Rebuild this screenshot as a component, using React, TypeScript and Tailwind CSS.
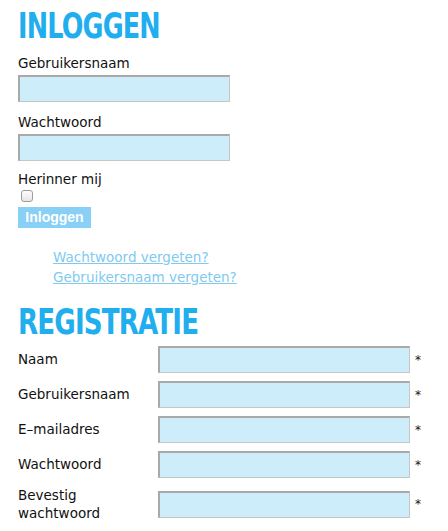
const headingFont = { fontFamily: '"DejaVu Sans Condensed", "Liberation Sans", sans-serif' };

function Field({ className = "" }: { className?: string }) {
  return (
    <input
      type="text"
      className={`block h-[27px] border-t-2 border-l-2 border-b border-r border-t-[#a9a9a9] border-l-[#a9a9a9] border-b-[#c6c6c6] border-r-[#c6c6c6] bg-[#ccedf9] outline-none ${className}`}
    />
  );
}

const registerRows = [
  { label: "Naam" },
  { label: "Gebruikersnaam" },
  { label: "E\u2013mailadres" },
  { label: "Wachtwoord" },
  { label: "Bevestig wachtwoord", wrap: true },
];

export default function App() {
  return (
    <div className="min-h-[531px] w-[448px] bg-white pl-[18px] pt-[9px] text-[13.5px] text-[#111]" style={{ fontFamily: '"DejaVu Sans", "Liberation Sans", sans-serif' }}>
      <h1 className="origin-left scale-x-[0.81] text-[35px] font-bold leading-[35px] tracking-[-1px] text-[#20aeef]" style={headingFont}>
        INLOGGEN
      </h1>

      <form className="mt-[10px]" onSubmit={(e) => e.preventDefault()}>
        <label className="block leading-[18px]">Gebruikersnaam</label>
        <Field className="mt-[3px] w-[212px]" />

        <label className="mt-[11px] block leading-[18px]">Wachtwoord</label>
        <Field className="mt-[3px] w-[212px]" />

        <label className="mt-[9px] block leading-[18px]">Herinner mij</label>
        <input
          type="checkbox"
          className="mt-[2px] ml-[3px] block h-[12px] w-[12px] appearance-none rounded-[3px] border border-[#9c9c9c] bg-gradient-to-b from-[#fdfdfd] to-[#e6e6e6]"
        />
        <button
          type="submit"
          className="mt-[5px] block h-[21px] w-[73px] bg-[#88d0f5] text-[14px] font-bold leading-[21px] text-white"
          style={{ fontFamily: '"Liberation Sans", Arial, sans-serif' }}
        >
          Inloggen
        </button>
      </form>

      <ul className="mt-[19px] pl-[35px] leading-[20px]">
        <li>
          <a href="#" className="text-[#80caf0] underline">Wachtwoord vergeten?</a>
        </li>
        <li>
          <a href="#" className="text-[#80caf0] underline">Gebruikersnaam vergeten?</a>
        </li>
      </ul>

      <h2 className="mt-[18px] origin-left scale-x-[0.83] text-[35px] font-bold leading-[35px] tracking-[-1px] text-[#20aeef]" style={headingFont}>
        REGISTRATIE
      </h2>

      <div className="mt-[6px] flex flex-col gap-[8px]">
        {registerRows.map((row) => (
          <div key={row.label} className="flex items-center">
            <span className={`w-[140px] ${row.wrap ? "pr-[40px] leading-[18px]" : "leading-[19px]"}`}>{row.label}</span>
            <Field className="w-[252px]" />
            <span className="ml-[5px] text-[12px]">*</span>
          </div>
        ))}
      </div>
    </div>
  );
}
